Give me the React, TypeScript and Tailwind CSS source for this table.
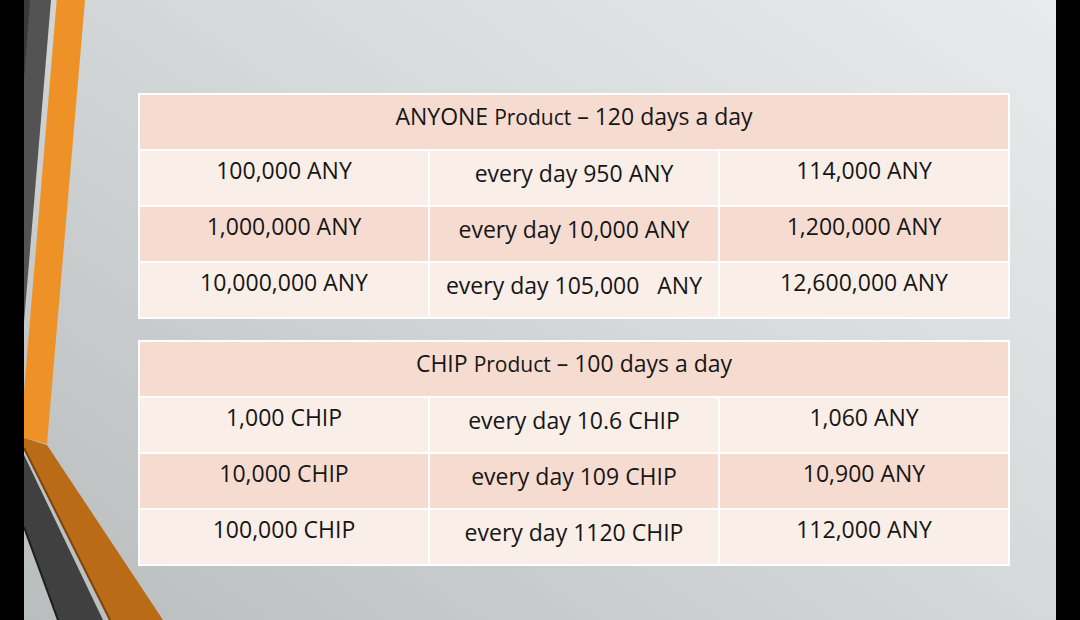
const anyoneRows = [
  ["100,000 ANY", "every day 950 ANY", "114,000 ANY"],
  ["1,000,000 ANY", "every day 10,000 ANY", "1,200,000 ANY"],
  ["10,000,000 ANY", "every day 105,000   ANY", "12,600,000 ANY"],
];

const chipRows = [
  ["1,000 CHIP", "every day 10.6 CHIP", "1,060 ANY"],
  ["10,000 CHIP", "every day 109 CHIP", "10,900 ANY"],
  ["100,000 CHIP", "every day 1120 CHIP", "112,000 ANY"],
];

function ProductTable({ name, days, rows }: { name: string; days: number; rows: string[][] }) {
  return (
    <div className="grid w-[872px] grid-cols-3 gap-[2px] bg-white p-[2px] font-['Open_Sans',sans-serif] text-[23px] leading-[30px] text-[#161616]">
      <div className="col-span-3 flex h-[54px] justify-center bg-[#f6dcd0] pt-[6px]">
        <span className="whitespace-pre">
          {name} <span className="text-[21px]">Product</span> – {days} days a day
        </span>
      </div>
      {rows.map((row, i) =>
        row.map((cell, j) => (
          <div
            key={i + "-" + j}
            className={
              (i % 2 === 1 ? "bg-[#f6dcd0] " : "bg-[#faeee9] ") +
              (j === 1 ? "pt-[7px] " : "pt-[4px] ") +
              "flex h-[54px] justify-center whitespace-pre"
            }
          >
            {cell}
          </div>
        ))
      )}
    </div>
  );
}

function Decor() {
  return (
    <svg className="absolute left-0 top-0" width="180" height="620" viewBox="0 0 180 620">
      <polygon points="0,0 27,0 0,322" fill="#535353" />
      <polygon points="0,0 6,0 0,80" fill="#3a3a3a" />
      <polygon points="32.7,0 61,0 23,444 0,438 0,392" fill="#ee9228" />
      <polygon points="0,455 79,620 34,620 0,527" fill="#404040" />
      <line x1="0" y1="527" x2="34" y2="620" stroke="#1e1e1e" strokeWidth="2" />
      <polygon points="0,438 23,445 139,620 86,620 0,447" fill="#ba6b16" />
      <line x1="0" y1="448" x2="86" y2="620" stroke="#7a430c" strokeWidth="2" />
    </svg>
  );
}

export default function App() {
  return (
    <div className="flex h-[620px] w-[1080px] overflow-hidden bg-black">
      <div className="w-[24px] shrink-0 bg-black" />
      <div className="relative flex-1 bg-[linear-gradient(215deg,#e8eaeb_0%,#d6d9da_45%,#b9bdbe_100%)]">
        <Decor />
        <div className="relative flex flex-col gap-[21px] pl-[114px] pt-[93px]">
          <ProductTable name="ANYONE" days={120} rows={anyoneRows} />
          <ProductTable name="CHIP" days={100} rows={chipRows} />
        </div>
      </div>
      <div className="w-[24px] shrink-0 bg-black" />
    </div>
  );
}
